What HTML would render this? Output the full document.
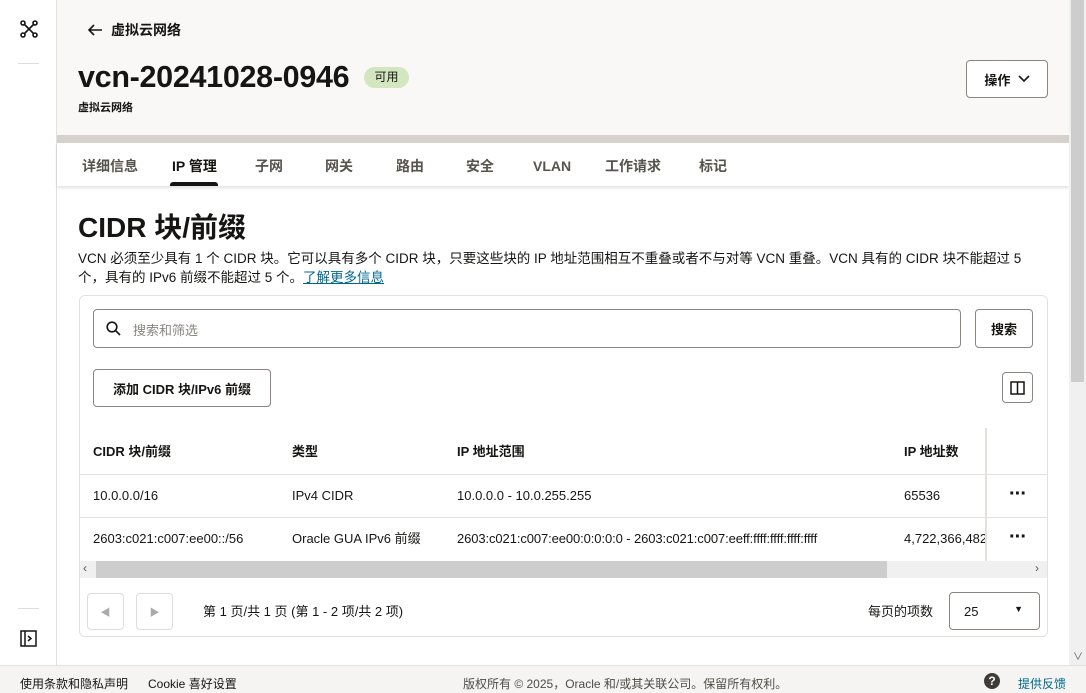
<!DOCTYPE html>
<html><head><meta charset="utf-8"><style>
*{box-sizing:border-box;margin:0;padding:0}
body{width:1086px;height:693px;overflow:hidden;font-family:"Liberation Sans","Noto Sans CJK SC",sans-serif;color:#161513;background:#fff;position:relative;font-size:14px}
.abs{position:absolute}
.side{left:0;top:0;width:57px;height:665px;border-right:1px solid #e4e1dd;background:#fff}
.hdr{left:57px;top:0;width:1012px;height:135px;background:#f9f8f6}
.band{left:57px;top:135px;width:1012px;height:8px;background:#d6d1cc}
.tabs{left:57px;top:143px;width:1012px;height:43px;background:#fff;box-shadow:0 2px 3px rgba(0,0,0,.12)}
.tab{position:absolute;top:13px;font-size:14px;line-height:20px;font-weight:bold;color:#57534e}
.btn{position:absolute;border:1px solid #8a8580;border-radius:4px;background:#fff;font-weight:bold;font-size:13px;display:flex;align-items:center;justify-content:center}
.card{left:79px;top:295px;width:969px;height:342px;border:1px solid #e4e1dd;border-radius:6px}
.row{position:absolute;left:80px;width:967px;border-bottom:1px solid #e4e1dd}
.c{position:absolute;font-size:13px;line-height:18px;height:18px}
.dots{position:absolute;font-size:20px;font-weight:bold;line-height:10px;letter-spacing:-1px}
.sb{left:1069px;top:0;width:17px;height:665px;background:#f0f0f0}
.foot{left:0;top:665px;width:1086px;height:28px;background:#f5f4f2;border-top:1px solid #e4e1dd;font-size:12px}
</style></head><body>
<div class="abs side">
<svg class="abs" style="left:19px;top:19px" width="20" height="20" viewBox="0 0 20 20" fill="none" stroke="#161513" stroke-width="1.6"><circle cx="4" cy="4" r="2"/><circle cx="16" cy="4" r="2"/><circle cx="4" cy="16" r="2"/><circle cx="16" cy="16" r="2"/><path d="M5.5 5.5L14.5 14.5M14.5 5.5L5.5 14.5"/></svg>
<div class="abs" style="left:18px;top:63px;width:21px;height:1px;background:#ddd"></div>
<div class="abs" style="left:18px;top:608px;width:21px;height:1px;background:#ddd"></div>
<svg class="abs" style="left:20px;top:630px" width="17" height="17" viewBox="0 0 17 17" fill="none" stroke="#161513" stroke-width="1.5"><rect x="1" y="1" width="15" height="15"/><path d="M5 1v15M8 6l3 2.5L8 11"/></svg>
</div>
<div class="abs hdr">
<svg class="abs" style="left:30px;top:23px" width="16" height="14" viewBox="0 0 16 14" fill="none" stroke="#161513" stroke-width="1.6"><path d="M15 7H2M7 2L2 7l5 5"/></svg>
<div class="abs" style="left:54px;top:20px;font-size:14px;font-weight:bold">虚拟云网络</div>
<div class="abs" style="left:21px;top:60px;font-size:30.5px;font-weight:bold;letter-spacing:-.3px">vcn-20241028-0946</div>
<div class="abs" style="left:307px;top:67px;width:45px;height:21px;border-radius:11px;background:#d2e6bf;font-size:12px;text-align:center;line-height:21px">可用</div>
<div class="abs" style="left:21px;top:99px;font-size:11px;font-weight:bold">虚拟云网络</div>
<div class="btn" style="left:909px;top:60px;width:82px;height:38px;font-size:13px">操作 &nbsp;<svg width="12" height="8" viewBox="0 0 12 8" fill="none" stroke="#161513" stroke-width="1.6"><path d="M1 1l5 5 5-5"/></svg></div>
</div>
<div class="abs band"></div>
<div class="abs tabs">
<span class="tab" style="left:25px">详细信息</span>
<span class="tab" style="left:115px;color:#161513">IP 管理</span>
<div class="abs" style="left:113px;top:39px;width:48px;height:4px;background:#161513;border-radius:3px 3px 0 0"></div>
<span class="tab" style="left:198px">子网</span>
<span class="tab" style="left:268px">网关</span>
<span class="tab" style="left:339px">路由</span>
<span class="tab" style="left:409px">安全</span>
<span class="tab" style="left:476px">VLAN</span>
<span class="tab" style="left:548px">工作请求</span>
<span class="tab" style="left:642px">标记</span>
</div>
<div class="abs" style="left:78px;top:206px;font-size:28px;font-weight:bold">CIDR 块/前缀</div>
<div class="abs" style="left:78px;top:249px;width:962px;font-size:13.5px;line-height:19px">VCN 必须至少具有 1 个 CIDR 块。它可以具有多个 CIDR 块，只要这些块的 IP 地址范围相互不重叠或者不与对等 VCN 重叠。VCN 具有的 CIDR 块不能超过 5 个，具有的 IPv6 前缀不能超过 5 个。<span style="color:#00688c;text-decoration:underline">了解更多信息</span></div>
<div class="abs card"></div>
<div class="abs" style="left:93px;top:309px;width:868px;height:39px;border:1px solid #8a8580;border-radius:4px"></div>
<svg class="abs" style="left:106px;top:321px" width="15" height="15" viewBox="0 0 15 15" fill="none" stroke="#161513" stroke-width="1.6"><circle cx="6" cy="6" r="4.8"/><path d="M9.5 9.5L14 14"/></svg>
<div class="abs" style="left:133px;top:320px;font-size:13px;color:#8a8580">搜索和筛选</div>
<div class="btn" style="left:975px;top:309px;width:58px;height:39px">搜索</div>
<div class="btn" style="left:93px;top:369px;width:178px;height:38px">添加 CIDR 块/IPv6 前缀</div>
<div class="btn" style="left:1002px;top:372px;width:31px;height:31px"><svg width="15" height="14" viewBox="0 0 15 14" fill="none" stroke="#161513" stroke-width="1.5"><rect x="1" y="1" width="13" height="12"/><path d="M7.5 1v12"/></svg></div>
<div class="row" style="top:430px;height:45px"></div>
<div class="row" style="top:475px;height:43px"></div>
<div class="abs" style="left:985px;top:428px;width:2px;height:133px;background:#e4e1dd"></div>
<div class="c" style="left:93px;top:443px;font-weight:bold">CIDR 块/前缀</div>
<div class="c" style="left:292px;top:443px;font-weight:bold">类型</div>
<div class="c" style="left:457px;top:443px;font-weight:bold">IP 地址范围</div>
<div class="c" style="left:904px;top:443px;font-weight:bold">IP 地址数</div>
<div class="c" style="left:93px;top:487px">10.0.0.0/16</div>
<div class="c" style="left:292px;top:487px">IPv4 CIDR</div>
<div class="c" style="left:457px;top:487px">10.0.0.0 - 10.0.255.255</div>
<div class="c" style="left:904px;top:487px">65536</div>
<div class="dots" style="left:1009px;top:489px">···</div>
<div class="c" style="left:93px;top:530px">2603:c021:c007:ee00::/56</div>
<div class="c" style="left:292px;top:530px">Oracle GUA IPv6 前缀</div>
<div class="c" style="left:457px;top:530px;letter-spacing:-.1px">2603:c021:c007:ee00:0:0:0:0 - 2603:c021:c007:eeff:ffff:ffff:ffff:ffff</div>
<div class="c" style="left:904px;top:530px;width:81px;overflow:hidden;white-space:nowrap">4,722,366,482</div>
<div class="dots" style="left:1009px;top:532px">···</div>
<div class="abs" style="left:80px;top:561px;width:967px;height:17px;background:#f0f0f0"></div>
<div class="abs" style="left:96px;top:561px;width:791px;height:17px;background:#cdcdcd"></div>
<div class="abs" style="left:83px;top:561px;font-size:12px;color:#555">‹</div>
<div class="abs" style="left:1035px;top:561px;font-size:12px;color:#555">›</div>
<div class="btn" style="left:87px;top:593px;width:37px;height:37px;border-color:#ddd;color:#aaa;font-size:10px">◀</div>
<div class="btn" style="left:136px;top:593px;width:37px;height:37px;border-color:#ddd;color:#aaa;font-size:10px">▶</div>
<div class="c" style="left:203px;top:603px">第 1 页/共 1 页 (第 1 - 2 项/共 2 项)</div>
<div class="c" style="left:868px;top:603px">每页的项数</div>
<div class="abs" style="left:949px;top:592px;width:91px;height:38px;border:1px solid #8a8580;border-radius:4px;font-size:13px;padding:11px 0 0 14px">25<span style="position:absolute;right:16px;top:11px;font-size:9px">▼</span></div>
<div class="abs sb"><div class="abs" style="left:2px;top:0;width:13px;height:382px;background:#cdcdcd"></div><div class="abs" style="left:4px;top:648px;font-size:10px;color:#555">∨</div></div>
<div class="abs foot">
<span class="abs" style="left:20px;top:9px">使用条款和隐私声明</span>
<span class="abs" style="left:148px;top:9px">Cookie 喜好设置</span>
<span class="abs" style="left:463px;top:9px;color:#4f4b47">版权所有 © 2025，Oracle 和/或其关联公司。保留所有权利。</span>
<span class="abs" style="left:984px;top:7px;width:16px;height:16px;border-radius:50%;background:#3f3b38;color:#fff;font-weight:bold;text-align:center;line-height:16px;font-size:12px">?</span>
<span class="abs" style="left:1018px;top:9px;color:#00688c">提供反馈</span>
</div>
</body></html>
